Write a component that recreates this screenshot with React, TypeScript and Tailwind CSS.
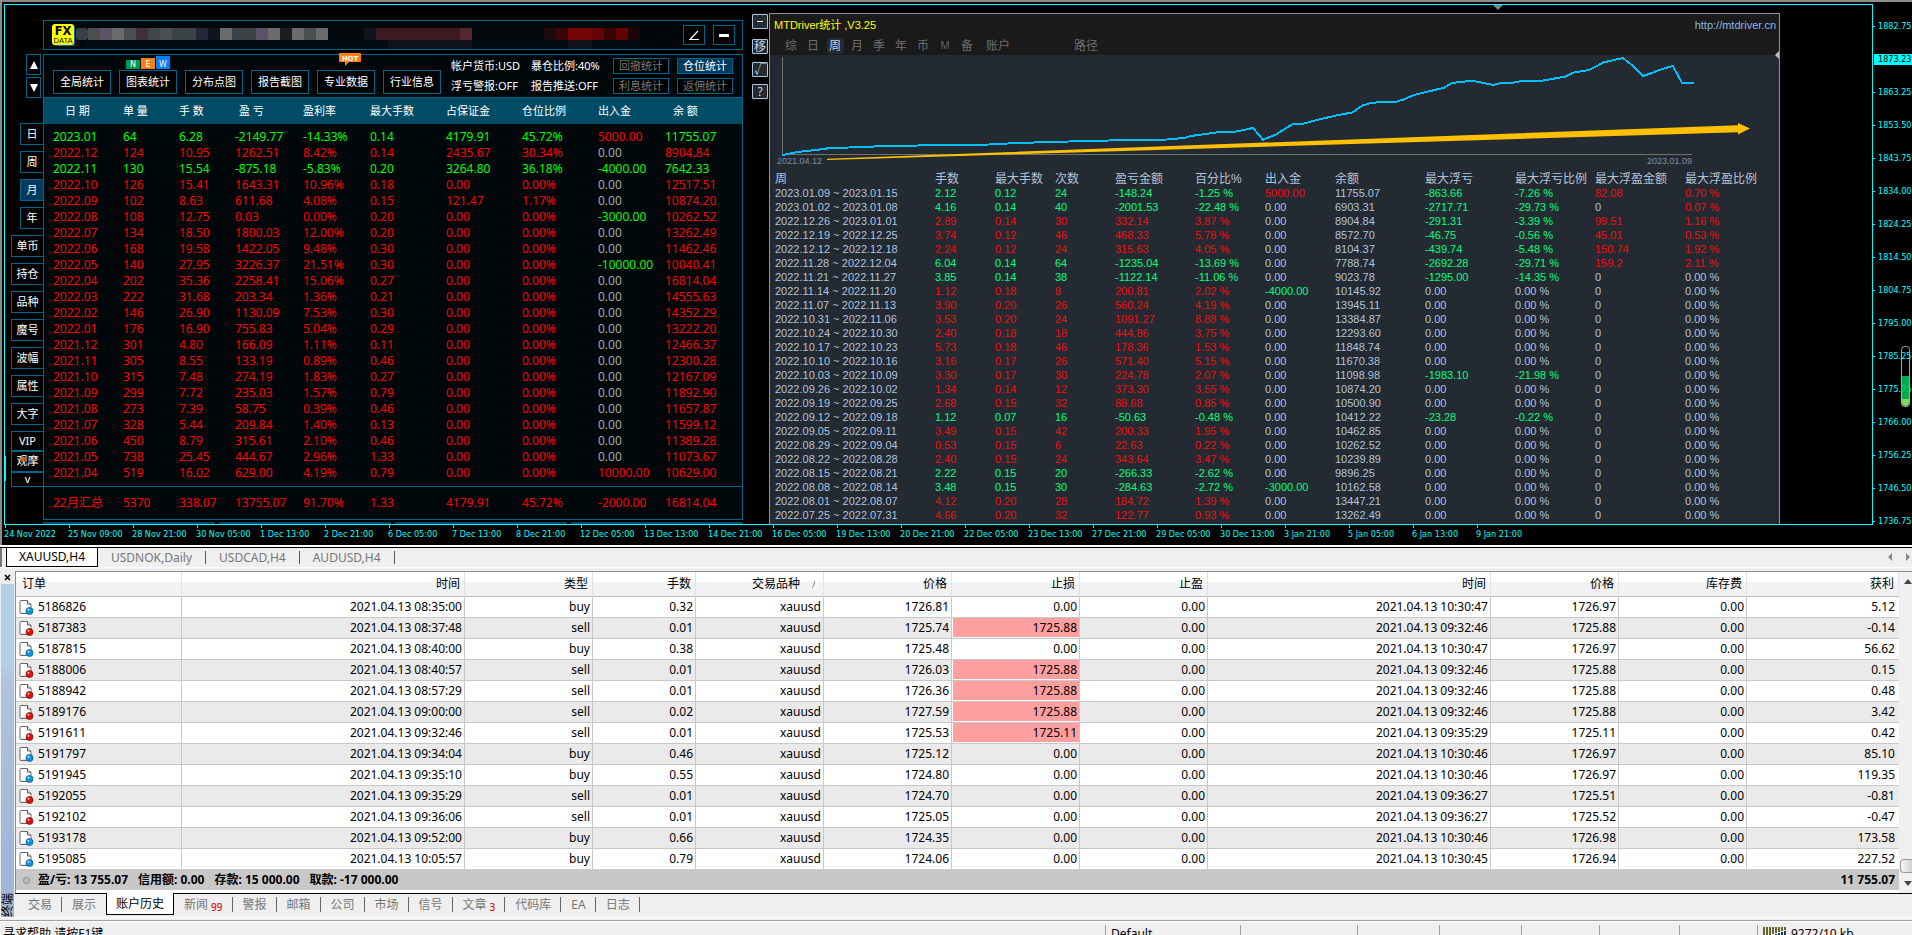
import React from 'react';

/* ---------- data ---------- */

const MONTHS: string[][] = [
  ['2023.01', '64', '6.28', '-2149.77', '-14.33%', '0.14', '4179.91', '45.72%', '5000.00', '11755.07'],
  ['2022.12', '124', '10.95', '1262.51', '8.42%', '0.14', '2435.67', '30.34%', '0.00', '8904.84'],
  ['2022.11', '130', '15.54', '-875.18', '-5.83%', '0.20', '3264.80', '36.18%', '-4000.00', '7642.33'],
  ['2022.10', '126', '15.41', '1643.31', '10.96%', '0.18', '0.00', '0.00%', '0.00', '12517.51'],
  ['2022.09', '102', '8.63', '611.68', '4.08%', '0.15', '121.47', '1.17%', '0.00', '10874.20'],
  ['2022.08', '108', '12.75', '0.03', '0.00%', '0.20', '0.00', '0.00%', '-3000.00', '10262.52'],
  ['2022.07', '134', '18.50', '1800.03', '12.00%', '0.20', '0.00', '0.00%', '0.00', '13262.49'],
  ['2022.06', '168', '19.58', '1422.05', '9.48%', '0.30', '0.00', '0.00%', '0.00', '11462.46'],
  ['2022.05', '140', '27.95', '3226.37', '21.51%', '0.30', '0.00', '0.00%', '-10000.00', '10040.41'],
  ['2022.04', '202', '35.36', '2258.41', '15.06%', '0.27', '0.00', '0.00%', '0.00', '16814.04'],
  ['2022.03', '222', '31.68', '203.34', '1.36%', '0.21', '0.00', '0.00%', '0.00', '14555.63'],
  ['2022.02', '146', '26.90', '1130.09', '7.53%', '0.30', '0.00', '0.00%', '0.00', '14352.29'],
  ['2022.01', '176', '16.90', '755.83', '5.04%', '0.29', '0.00', '0.00%', '0.00', '13222.20'],
  ['2021.12', '301', '4.80', '166.09', '1.11%', '0.11', '0.00', '0.00%', '0.00', '12466.37'],
  ['2021.11', '305', '8.55', '133.19', '0.89%', '0.46', '0.00', '0.00%', '0.00', '12300.28'],
  ['2021.10', '315', '7.48', '274.19', '1.83%', '0.27', '0.00', '0.00%', '0.00', '12167.09'],
  ['2021.09', '299', '7.72', '235.03', '1.57%', '0.79', '0.00', '0.00%', '0.00', '11892.90'],
  ['2021.08', '273', '7.39', '58.75', '0.39%', '0.46', '0.00', '0.00%', '0.00', '11657.87'],
  ['2021.07', '328', '5.44', '209.84', '1.40%', '0.13', '0.00', '0.00%', '0.00', '11599.12'],
  ['2021.06', '450', '8.79', '315.61', '2.10%', '0.46', '0.00', '0.00%', '0.00', '11389.28'],
  ['2021.05', '738', '25.45', '444.67', '2.96%', '1.33', '0.00', '0.00%', '0.00', '11073.67'],
  ['2021.04', '519', '16.02', '629.00', '4.19%', '0.79', '0.00', '0.00%', '10000.00', '10629.00'],
];
const MONTH_TOTAL = ['22月汇总', '5370', '338.07', '13755.07', '91.70%', '1.33', '4179.91', '45.72%', '-2000.00', '16814.04'];
const MONTH_HEADS: [string, string][] = [
  ['日 期', 'w-[79px] pl-[21px]'],
  ['单 量', 'w-[56px]'],
  ['手 数', 'w-[56px]'],
  ['盈 亏', 'w-[68px] pl-1'],
  ['盈利率', 'w-[67px]'],
  ['最大手数', 'w-[76px]'],
  ['占保证金', 'w-[76px]'],
  ['仓位比例', 'w-[76px]'],
  ['出入金', 'w-[67px]'],
  ['余 额', 'w-[77px] pl-2'],
];

const WEEKS: string[][] = [
  ['2023.01.09 ~ 2023.01.15', '2.12', '0.12', '24', '-148.24', '-1.25 %', '5000.00', '11755.07', '-863.66', '-7.26 %', '82.08', '0.70 %'],
  ['2023.01.02 ~ 2023.01.08', '4.16', '0.14', '40', '-2001.53', '-22.48 %', '0.00', '6903.31', '-2717.71', '-29.73 %', '0', '0.07 %'],
  ['2022.12.26 ~ 2023.01.01', '2.89', '0.14', '30', '332.14', '3.87 %', '0.00', '8904.84', '-291.31', '-3.39 %', '99.51', '1.16 %'],
  ['2022.12.19 ~ 2022.12.25', '3.74', '0.12', '46', '468.33', '5.78 %', '0.00', '8572.70', '-46.75', '-0.56 %', '45.01', '0.53 %'],
  ['2022.12.12 ~ 2022.12.18', '2.24', '0.12', '24', '315.63', '4.05 %', '0.00', '8104.37', '-439.74', '-5.48 %', '150.74', '1.92 %'],
  ['2022.11.28 ~ 2022.12.04', '6.04', '0.14', '64', '-1235.04', '-13.69 %', '0.00', '7788.74', '-2692.28', '-29.71 %', '159.2', '2.11 %'],
  ['2022.11.21 ~ 2022.11.27', '3.85', '0.14', '38', '-1122.14', '-11.06 %', '0.00', '9023.78', '-1295.00', '-14.35 %', '0', '0.00 %'],
  ['2022.11.14 ~ 2022.11.20', '1.12', '0.18', '8', '200.81', '2.02 %', '-4000.00', '10145.92', '0.00', '0.00 %', '0', '0.00 %'],
  ['2022.11.07 ~ 2022.11.13', '3.90', '0.20', '26', '560.24', '4.19 %', '0.00', '13945.11', '0.00', '0.00 %', '0', '0.00 %'],
  ['2022.10.31 ~ 2022.11.06', '3.53', '0.20', '24', '1091.27', '8.88 %', '0.00', '13384.87', '0.00', '0.00 %', '0', '0.00 %'],
  ['2022.10.24 ~ 2022.10.30', '2.40', '0.18', '18', '444.86', '3.75 %', '0.00', '12293.60', '0.00', '0.00 %', '0', '0.00 %'],
  ['2022.10.17 ~ 2022.10.23', '5.73', '0.18', '46', '178.36', '1.53 %', '0.00', '11848.74', '0.00', '0.00 %', '0', '0.00 %'],
  ['2022.10.10 ~ 2022.10.16', '3.16', '0.17', '26', '571.40', '5.15 %', '0.00', '11670.38', '0.00', '0.00 %', '0', '0.00 %'],
  ['2022.10.03 ~ 2022.10.09', '3.30', '0.17', '30', '224.78', '2.07 %', '0.00', '11098.98', '-1983.10', '-21.98 %', '0', '0.00 %'],
  ['2022.09.26 ~ 2022.10.02', '1.34', '0.14', '12', '373.30', '3.55 %', '0.00', '10874.20', '0.00', '0.00 %', '0', '0.00 %'],
  ['2022.09.19 ~ 2022.09.25', '2.68', '0.15', '32', '88.68', '0.85 %', '0.00', '10500.90', '0.00', '0.00 %', '0', '0.00 %'],
  ['2022.09.12 ~ 2022.09.18', '1.12', '0.07', '16', '-50.63', '-0.48 %', '0.00', '10412.22', '-23.28', '-0.22 %', '0', '0.00 %'],
  ['2022.09.05 ~ 2022.09.11', '3.49', '0.15', '42', '200.33', '1.95 %', '0.00', '10462.85', '0.00', '0.00 %', '0', '0.00 %'],
  ['2022.08.29 ~ 2022.09.04', '0.53', '0.15', '6', '22.63', '0.22 %', '0.00', '10262.52', '0.00', '0.00 %', '0', '0.00 %'],
  ['2022.08.22 ~ 2022.08.28', '2.40', '0.15', '24', '343.64', '3.47 %', '0.00', '10239.89', '0.00', '0.00 %', '0', '0.00 %'],
  ['2022.08.15 ~ 2022.08.21', '2.22', '0.15', '20', '-266.33', '-2.62 %', '0.00', '9896.25', '0.00', '0.00 %', '0', '0.00 %'],
  ['2022.08.08 ~ 2022.08.14', '3.48', '0.15', '30', '-284.63', '-2.72 %', '-3000.00', '10162.58', '0.00', '0.00 %', '0', '0.00 %'],
  ['2022.08.01 ~ 2022.08.07', '4.12', '0.20', '28', '184.72', '1.39 %', '0.00', '13447.21', '0.00', '0.00 %', '0', '0.00 %'],
  ['2022.07.25 ~ 2022.07.31', '4.66', '0.20', '32', '122.77', '0.93 %', '0.00', '13262.49', '0.00', '0.00 %', '0', '0.00 %'],
];
const WEEK_HEADS: [string, string][] = [
  ['周', 'w-[160px]'],
  ['手数', 'w-[60px]'],
  ['最大手数', 'w-[60px]'],
  ['次数', 'w-[60px]'],
  ['盈亏金额', 'w-[80px]'],
  ['百分比%', 'w-[70px]'],
  ['出入金', 'w-[70px]'],
  ['余额', 'w-[90px]'],
  ['最大浮亏', 'w-[90px]'],
  ['最大浮亏比例', 'w-[80px]'],
  ['最大浮盈金额', 'w-[90px]'],
  ['最大浮盈比例', 'w-[99px]'],
];

const ORDERS: string[][] = [
  ['5186826', '2021.04.13 08:35:00', 'buy', '0.32', 'xauusd', '1726.81', '0.00', '0.00', '2021.04.13 10:30:47', '1726.97', '0.00', '5.12'],
  ['5187383', '2021.04.13 08:37:48', 'sell', '0.01', 'xauusd', '1725.74', '1725.88', '0.00', '2021.04.13 09:32:46', '1725.88', '0.00', '-0.14'],
  ['5187815', '2021.04.13 08:40:00', 'buy', '0.38', 'xauusd', '1725.48', '0.00', '0.00', '2021.04.13 10:30:47', '1726.97', '0.00', '56.62'],
  ['5188006', '2021.04.13 08:40:57', 'sell', '0.01', 'xauusd', '1726.03', '1725.88', '0.00', '2021.04.13 09:32:46', '1725.88', '0.00', '0.15'],
  ['5188942', '2021.04.13 08:57:29', 'sell', '0.01', 'xauusd', '1726.36', '1725.88', '0.00', '2021.04.13 09:32:46', '1725.88', '0.00', '0.48'],
  ['5189176', '2021.04.13 09:00:00', 'sell', '0.02', 'xauusd', '1727.59', '1725.88', '0.00', '2021.04.13 09:32:46', '1725.88', '0.00', '3.42'],
  ['5191611', '2021.04.13 09:32:46', 'sell', '0.01', 'xauusd', '1725.53', '1725.11', '0.00', '2021.04.13 09:35:29', '1725.11', '0.00', '0.42'],
  ['5191797', '2021.04.13 09:34:04', 'buy', '0.46', 'xauusd', '1725.12', '0.00', '0.00', '2021.04.13 10:30:46', '1726.97', '0.00', '85.10'],
  ['5191945', '2021.04.13 09:35:10', 'buy', '0.55', 'xauusd', '1724.80', '0.00', '0.00', '2021.04.13 10:30:46', '1726.97', '0.00', '119.35'],
  ['5192055', '2021.04.13 09:35:29', 'sell', '0.01', 'xauusd', '1724.70', '0.00', '0.00', '2021.04.13 09:36:27', '1725.51', '0.00', '-0.81'],
  ['5192102', '2021.04.13 09:36:06', 'sell', '0.01', 'xauusd', '1725.05', '0.00', '0.00', '2021.04.13 09:36:27', '1725.52', '0.00', '-0.47'],
  ['5193178', '2021.04.13 09:52:00', 'buy', '0.66', 'xauusd', '1724.35', '0.00', '0.00', '2021.04.13 10:30:46', '1726.98', '0.00', '173.58'],
  ['5195085', '2021.04.13 10:05:57', 'buy', '0.79', 'xauusd', '1724.06', '0.00', '0.00', '2021.04.13 10:30:45', '1726.94', '0.00', '227.52'],
];
const ORDER_HEADS: [string, string][] = [
  ['订单', 'w-[166px]'],
  ['时间', 'w-[283px]'],
  ['类型', 'w-[128px]'],
  ['手数', 'w-[103px]'],
  ['交易品种', 'w-[128px]'],
  ['价格', 'w-[128px]'],
  ['止损', 'w-[128px]'],
  ['止盈', 'w-[128px]'],
  ['时间', 'w-[283px]'],
  ['价格', 'w-[128px]'],
  ['库存费', 'w-[128px]'],
  ['获利', 'w-[152px]'],
];

const TIMES = [
  '24 Nov 2022', '25 Nov 09:00', '28 Nov 21:00', '30 Nov 05:00', '1 Dec 13:00', '2 Dec 21:00', '6 Dec 05:00', '7 Dec 13:00',
  '8 Dec 21:00', '12 Dec 05:00', '13 Dec 13:00', '14 Dec 21:00', '16 Dec 05:00', '19 Dec 13:00', '20 Dec 21:00', '22 Dec 05:00',
  '23 Dec 13:00', '27 Dec 21:00', '29 Dec 05:00', '30 Dec 13:00', '3 Jan 21:00', '5 Jan 05:00', '6 Jan 13:00', '9 Jan 21:00',
];
const PRICES = [
  '1882.75', '1873.23', '1863.25', '1853.50', '1843.75', '1834.00', '1824.25', '1814.50',
  '1804.75', '1795.00', '1785.25', '1775.75', '1766.00', '1756.25', '1746.50', '1736.75',
];

/* start, width, colour of the blocks that hide the account name */
const MOSAIC: [number, number, string][] = [
  [0, 12, '#3b4044'], [12, 12, '#4d4f4f'], [24, 12, '#5c5366'], [36, 12, '#6b6b6b'], [48, 12, '#4b4f50'], [60, 12, '#40303a'],
  [72, 12, '#3e464a'], [84, 12, '#4a5050'], [96, 24, '#3b4246'], [120, 12, '#22283a'], [132, 12, '#10141e'], [144, 12, '#6b6b6b'],
  [156, 24, '#3b4246'], [180, 12, '#5a5266'], [192, 12, '#6b6b6b'], [204, 12, '#1e1c1e'], [216, 12, '#6b6b6b'], [228, 12, '#4a5050'],
  [240, 12, '#6b6b6b'], [288, 12, '#10141e'], [300, 84, '#3b1a22'], [384, 12, '#552830'], [468, 12, '#1f0a0e'], [480, 12, '#3a0709'],
  [492, 24, '#750505'], [516, 12, '#650404'], [528, 12, '#3a0405'], [540, 12, '#650202'], [552, 12, '#200407'],
];

/* ---------- small parts ---------- */

function Logo() {
  return (
    <svg viewBox="0 0 23 22" className="h-[22px] w-[23px] shrink-0" role="img" aria-label="FX DATA">
      <rect x="1" y="1" width="22" height="21" rx="3" fill="#0068b0" />
      <rect width="22" height="21" rx="3" fill="#ffff00" />
      <text x="11" y="11" textAnchor="middle" fontFamily="DejaVu Sans" fontWeight="bold" fontSize="11.500" fill="#000">FX</text>
      <text x="11" y="18.500" textAnchor="middle" fontFamily="Liberation Sans" fontSize="7.500" fill="#000">DATA</text>
    </svg>
  );
}

function Mosaic() {
  return (
    <svg viewBox="0 0 566 28" className="h-7 w-[566px]" aria-hidden="true">
      <rect x="0" y="1" width="564" height="24" rx="8" fill="#03090d" />
      <rect x="10" y="19" width="554" height="9" fill="#020c12" />
      <rect x="312" y="19" width="84" height="9" fill="#11131b" />
      <rect x="492" y="19" width="24" height="9" fill="#11131b" />
      {MOSAIC.map(([x, w, fill]) => (
        <rect key={x} x={x} y="7" width={w} height="12" fill={fill} rx={x === 0 ? 3 : 0} />
      ))}
    </svg>
  );
}

function DocIcon({ sell }: { sell: boolean }) {
  return (
    <svg viewBox="0 0 15 16" className="h-4 w-[15px] shrink-0" aria-hidden="true">
      <path d="M1 2.500Q1 1.500 2 1.500H8.500L12 5V14.500H2Q1 14.500 1 13.500Z" fill="#fff" stroke="#666" />
      <path d="M3 13.500H11V6" fill="none" stroke="#ddd" />
      <path d="M8.500 1.500V5H12" fill="#fff" stroke="#555" />
      <circle cx="10.500" cy="12" r="3.500" fill={sell ? '#dd1111' : '#1193dd'} stroke={sell ? '#8a1500' : '#0a5c9c'} strokeWidth="0.800" />
      <circle cx="9.500" cy="10.800" r="1" fill="#fff" opacity="0.800" />
    </svg>
  );
}

function SideButton({ label, active, wide, height }: { label: string; active?: boolean; wide?: boolean; height?: string }) {
  return (
    <button
      type="button"
      className={`flex items-center justify-center border border-r-0 border-[#00658a] text-[11px] text-white ${wide ? 'w-8' : 'w-[23px]'} ${height ?? 'h-[22px]'} ${active ? 'bg-[#003a5c]' : 'bg-black'}`}
    >
      {label}
    </button>
  );
}

/* ---------- monthly statistics panel ---------- */

function monthColor(row: string[], col: number) {
  if (col === 8) {
    if (row[8] === '0.00') return 'text-[#a8a8a8]';
    return row[8].startsWith('-') ? 'text-[#00ff00]' : 'text-[#ff0000]';
  }
  return row[3].startsWith('-') ? 'text-[#00ff00]' : 'text-[#ff0000]';
}

function MonthPanel() {
  const tools = ['全局统计', '图表统计', '分布点图', '报告截图', '专业数据', '行业信息'];
  return (
    <div className="flex w-[700px] shrink-0 flex-col pt-[15px]">
      <div className="flex h-[30px] items-center gap-2 border border-[#00658a] bg-[#00070b] pl-2 pr-[7px]">
        <div className="flex flex-1 items-center gap-px">
          <Logo />
          <Mosaic />
        </div>
        <button type="button" aria-label="角度" className="flex h-5 w-[22px] items-center justify-center border border-[#00658a] bg-black">
          <svg viewBox="0 0 12 12" className="h-3 w-3" aria-hidden="true"><path d="M10 2L2 10.500H11" fill="none" stroke="#fff" strokeWidth="1.200" /></svg>
        </button>
        <button type="button" aria-label="最小化" className="flex h-5 w-[22px] items-center justify-center border border-[#00658a] bg-black">
          <span className="h-[3px] w-[10px] bg-white" />
        </button>
      </div>
      <div className="mt-1 border border-[#00658a] bg-[#00070b]">
        <div className="flex h-[42px] items-start gap-[10px] pl-[9px] pr-[9px] text-[11px] text-white">
          <div className="flex gap-2 pt-[15px]">
            {tools.map((t) => (
              <button key={t} type="button" className="relative h-6 w-[58px] whitespace-nowrap border border-[#00658a] bg-black">
                {t}
                {t === '图表统计' && (
                  <span className="absolute -top-[15px] left-1.5 flex items-end gap-px font-['DejaVu_Sans'] text-[8px] leading-[8px]">
                    <span className="w-[14px] bg-[#009944] pt-px">N</span>
                    <span className="w-[14px] bg-[#ff7f0e] pt-[3px]">E</span>
                    <span className="w-[14px] bg-[#0080ff] pt-[5px]">W</span>
                  </span>
                )}
                {t === '专业数据' && (
                  <span className="absolute -top-[18px] left-[21px]">
                    <svg viewBox="0 0 22 14" className="h-[14px] w-[22px]" aria-label="HOT">
                      <path d="M0 1Q0 0 1 0H21Q22 0 22 1V9H10L6 13V9H0Z" fill="#ff7f0e" />
                      <text x="11" y="7.500" textAnchor="middle" fontFamily="DejaVu Sans" fontWeight="bold" fontSize="7" fill="#fff">HOT</text>
                    </svg>
                  </span>
                )}
              </button>
            ))}
          </div>
          <div className="grid flex-1 grid-cols-[80px_82px_56px_56px] items-center gap-y-1 pt-[3px] leading-4">
            <span className="whitespace-nowrap">帐户货币:USD</span>
            <span className="whitespace-nowrap">暴仓比例:40%</span>
            <button type="button" className="flex h-4 items-center justify-center border border-[#00658a] bg-black text-[#7a7a7a]">回撤统计</button>
            <button type="button" className="ml-2 flex h-4 w-14 items-center justify-center border border-[#00658a] bg-[#003a5c]">仓位统计</button>
            <span className="whitespace-nowrap">浮亏警报:OFF</span>
            <span className="whitespace-nowrap">报告推送:OFF</span>
            <button type="button" className="flex h-4 items-center justify-center border border-[#00658a] bg-black text-[#7a7a7a]">利息统计</button>
            <button type="button" className="ml-2 flex h-4 w-14 items-center justify-center border border-[#00658a] bg-black text-[#7a7a7a]">返佣统计</button>
          </div>
        </div>
        <table className="w-full table-fixed border-separate border-spacing-0 text-left text-[12px] leading-4">
          <thead>
            <tr>
              {MONTH_HEADS.map(([h, c]) => (
                <th key={h} className={`h-[27px] whitespace-pre border-t border-[#00658a] bg-[#004c66] text-[11px] font-normal text-white ${c}`}>{h}</th>
              ))}
            </tr>
            <tr aria-hidden="true"><td colSpan={10} className="h-[5px]" /></tr>
          </thead>
          <tbody>
            {MONTHS.map((r) => (
              <tr key={r[0]}>
                {r.map((v, i) => (
                  <td key={i} className={`h-4 whitespace-nowrap ${i === 0 ? 'pl-[9px]' : ''} ${monthColor(r, i)}`}>{v}</td>
                ))}
              </tr>
            ))}
          </tbody>
          <tfoot>
            <tr aria-hidden="true"><td colSpan={10} className="h-[6px] border-b border-[#00658a]" /></tr>
            <tr className="text-[#ff0000]">
              {MONTH_TOTAL.map((v, i) => (
                <td key={i} className={`h-8 whitespace-nowrap ${i === 0 ? 'pl-[9px]' : ''}`}>{v}</td>
              ))}
            </tr>
          </tfoot>
        </table>
      </div>
      <div className="mt-[2px] grid h-[2px] grid-cols-4 gap-1">
        <span className="bg-[#004c66]" /><span className="bg-[#004c66]" /><span className="bg-[#004c66]" /><span className="bg-[#004c66]" />
      </div>
    </div>
  );
}

function SideRail() {
  return (
    <nav className="flex w-[38px] shrink-0 flex-col items-end pt-[49px]">
      <button type="button" aria-label="上" className="mr-[2px] flex h-[21px] w-[15px] items-center justify-center border border-[#00658a]">
        <svg viewBox="0 0 8 8" className="h-2 w-2" aria-hidden="true"><path d="M4 0L8 8H0Z" fill="#fff" /></svg>
      </button>
      <button type="button" aria-label="下" className="mr-[2px] mt-[2px] flex h-[21px] w-[15px] items-center justify-center border border-[#00658a]">
        <svg viewBox="0 0 8 8" className="h-2 w-2" aria-hidden="true"><path d="M0 0H8L4 8Z" fill="#fff" /></svg>
      </button>
      <div className="mt-[25px] flex flex-col items-end gap-1.5">
        <SideButton label="日" />
        <SideButton label="周" />
        <SideButton label="月" active />
        <SideButton label="年" />
        {['单币', '持仓', '品种', '魔号', '波幅', '属性', '大字'].map((l) => (
          <SideButton key={l} label={l} wide />
        ))}
        <div className="flex flex-col">
          <SideButton label="VIP" wide height="h-5" />
          <SideButton label="观摩" wide height="h-[21px]" />
          <SideButton label="v" wide height="h-[15px]" />
        </div>
      </div>
    </nav>
  );
}

/* ---------- weekly statistics panel ---------- */

const CURVE =
  '782,155 788,154 797,152 816,150 830,148 868,147 880,146 918,145.5 989,144.5 1017,143 1069,141.5 1109,140.5 1167,139.5 1184,138 1191,136 1220,132 1236,131.5 1253,128 1263,139.7 1270,137 1276,134.5 1292,124.5 1304,123.6 1314,120.7 1337,115.3 1353,112.3 1362,105.7 1369,103.5 1380,102 1396,101.7 1403,99.7 1415,94.7 1444,87.7 1452,83 1472,80.7 1493,85 1501,83 1513,82.7 1522,81 1542,80.7 1565,76.7 1573,72.7 1589,70 1604,62.3 1623,58 1633,66 1643,76 1651,73.3 1662,69 1673,66 1682,83 1694,83';

function weekColor(row: string[], col: number) {
  const v = row[col];
  if (col === 0 || col === 7) return '';
  const gain = 'text-[#ee1010]';
  const loss = 'text-[#00ff7f]';
  if (col <= 5) return row[4].startsWith('-') ? loss : gain;
  if (parseFloat(v) === 0) return '';
  return v.startsWith('-') ? loss : gain;
}

function WeekPanel() {
  return (
    <div className="relative mr-[92px] mt-2 flex min-w-0 flex-1 flex-col border border-b-0 border-[#8592a2] bg-[#242a32] font-['Liberation_Sans','Noto_Sans_CJK_SC',sans-serif] text-[11px] text-[#b0c4de]">
      <div className="bg-[#1a1a1a]">
        <div className="flex h-[22px] items-center justify-between pl-1 pr-[3px]">
          <h2 className="text-[#ffff00]">MTDriver统计 ,V3.25</h2>
          <a href="http://mtdriver.cn" className="text-[#87b8e6]">http://mtdriver.cn</a>
        </div>
        <div className="flex h-[19px] items-center pl-[10px] text-[12px] text-[#6e6e6e]">
          {['综', '日', '周', '月', '季', '年', '币', 'M', '备'].map((t) => (
            <span key={t} className="flex w-[22px] justify-center">
              <button type="button" className={`flex h-4 w-[17px] items-center justify-center rounded-sm ${t === '周' ? 'bg-[#242a32] text-[#c0d4ee]' : t === 'M' ? 'text-[11px] text-[#5a6478]' : ''}`}>{t}</button>
            </span>
          ))}
          <button type="button" className="ml-2">账户</button>
          <button type="button" className="ml-16">路径</button>
        </div>
      </div>
      <svg viewBox="770 55 1009 100" preserveAspectRatio="none" className="block h-[100px] w-full overflow-visible" role="img" aria-label="余额曲线">
        <path d="M782.500 57V154.500H1692" fill="none" stroke="#6f736b" />
        <polyline points={CURVE} fill="none" stroke="#00bfff" strokeWidth="2" strokeLinejoin="round" shapeRendering="crispEdges" />
        <path d="M827 158.700L1738 125.200V123L1750 128.500L1738 134.500V132.300L827 160Z" fill="#ffc000" />
      </svg>
      <div className="flex h-[17px] justify-between pl-[7px] pr-[87px] text-[9px] leading-[12px] text-[#7d8da1]">
        <span>2021.04.12</span>
        <span>2023.01.09</span>
      </div>
      <table className="w-full table-fixed border-separate border-spacing-0 text-left leading-[14px]">
        <thead>
          <tr>
            {WEEK_HEADS.map(([h, c]) => (
              <th key={h} className={`h-[14px] whitespace-nowrap pl-[5px] text-[12px] font-normal ${c}`}>{h}</th>
            ))}
          </tr>
        </thead>
        <tbody>
          {WEEKS.map((r) => (
            <tr key={r[0]}>
              {r.map((v, i) => (
                <td key={i} className={`h-[14px] whitespace-nowrap pl-[5px] ${weekColor(r, i)}`}>{v}</td>
              ))}
            </tr>
          ))}
        </tbody>
      </table>
      <svg viewBox="0 0 4 8" className="absolute right-0 top-[37px] h-2 w-1" aria-hidden="true"><path d="M4 0V8L0 4Z" fill="#c0c0c0" /></svg>
    </div>
  );
}

function WeekRail() {
  const cls = 'flex h-[15px] w-4 items-center justify-center rounded-[1px] border border-[#b0c4de] bg-[#242a32] text-[12px] leading-3 text-[#c8d4e4]';
  return (
    <div className="ml-[9px] mr-px flex shrink-0 flex-col pt-[9px]">
      <button type="button" aria-label="收起" className={cls}><span className="h-px w-1.5 bg-white" /></button>
      <button type="button" className={`mt-[10px] ${cls}`}>移</button>
      <button type="button" className={`mt-2 ${cls}`}>√</button>
      <button type="button" className={`mt-[7px] ${cls}`}>?</button>
    </div>
  );
}

/* ---------- chart window ---------- */

function ChartWindow() {
  return (
    <section className="flex shrink-0 border-l-2 border-t-2 border-[#8c8c8c] bg-black pl-[2px] pt-[2px]">
      <div className="min-w-0 flex-1">
        <div className="relative flex items-stretch border border-[#00ffff]">
          <SideRail />
          <MonthPanel />
          <WeekRail />
          <WeekPanel />
          <span className="absolute bottom-[43px] left-0 h-[25px] w-px bg-[#00ffff]" />
          <svg viewBox="0 0 10 5" className="absolute left-[79.7%] top-0 h-[5px] w-[10px]" aria-hidden="true"><path d="M0 0H10L5 5Z" fill="#778899" /></svg>
        </div>
        <div className="flex h-5 overflow-hidden font-['DejaVu_Sans_Condensed','Noto_Sans',sans-serif] text-[9px] leading-[13px] text-[#00ffff]">
          {TIMES.map((t) => (
            <div key={t} className="w-16 shrink-0 whitespace-nowrap">
              <div className="ml-px h-[3px] w-px bg-[#00ffff]" />
              <div>{t}</div>
            </div>
          ))}
        </div>
      </div>
      <div className="relative w-[39px] shrink-0 pt-[6px] font-['DejaVu_Sans_Condensed','Noto_Sans',sans-serif] text-[9px] leading-[11px] text-[#00ffff]">
        {PRICES.map((p, i) => (
          <div key={p} className="flex h-[33px] items-center">
            {i !== 1 && <span className="mr-[3px] h-px w-[2px] bg-[#00ffff]" />}
            <span className={i === 1 ? 'ml-px flex-1 bg-[#00ffff] pl-1 text-black' : ''}>{p}</span>
          </div>
        ))}
        <svg viewBox="0 0 9 61" className="absolute right-[2px] top-[342px] h-[61px] w-[9px]" aria-hidden="true">
          <rect x="1" y="30" width="7" height="23" fill="#00c85a" opacity="0.850" />
          <path d="M1 53H8V57Q8 60 4.500 60T1 57Z" fill="#7fd860" />
          <rect x="0.500" y="0.500" width="8" height="60" rx="3" fill="none" stroke="#a9a0b4" />
        </svg>
      </div>
    </section>
  );
}

function ChartTabs() {
  const cls = 'my-[3px] border-r border-[#555] px-[13px] text-[#777]';
  return (
    <div className="flex shrink-0 border-t-2 border-white bg-[#efefef] leading-[14px]">
      <div className="flex h-5 flex-1 border-t border-black">
        <span className="w-[6px] border-l-2 border-[#777]" />
        <button type="button" className="w-[92px] border border-t-0 border-black bg-white text-black">XAUUSD,H4</button>
        <div className="flex">
          <button type="button" className={cls}>USDNOK,Daily</button>
          <button type="button" className={cls}>USDCAD,H4</button>
          <button type="button" className={cls}>AUDUSD,H4</button>
        </div>
        <div className="ml-auto flex items-start gap-[14px] pr-[2px] pt-[5px]">
          <button type="button" aria-label="向左" className="flex"><svg viewBox="0 0 4 8" className="h-2 w-1" aria-hidden="true"><path d="M4 0V8L0 4Z" fill="#888" /></svg></button>
          <button type="button" aria-label="向右" className="flex"><svg viewBox="0 0 4 8" className="h-2 w-1" aria-hidden="true"><path d="M0 0V8L4 4Z" fill="#888" /></svg></button>
        </div>
      </div>
    </div>
  );
}

/* ---------- terminal ---------- */

function OrdersTable() {
  return (
    <table className="w-full table-fixed border-separate border-spacing-0 text-right leading-5">
      <thead>
        <tr>
          {ORDER_HEADS.map(([h, c], i) => (
            <th
              key={i}
              className={`h-[25px] border-b border-r border-b-[#bdbdbd] border-r-[#e2e3e5] bg-linear-to-b from-white from-40% to-[#f1f2f4] to-45% pb-px font-normal ${c} ${i === 0 ? 'pl-[6px] text-left' : 'pr-1'}`}
            >
              {i === 4 ? (
                <span className="flex items-center justify-end gap-3">
                  {h}
                  <svg viewBox="0 0 6 8" className="mr-px h-2 w-1.5" aria-hidden="true"><path d="M0.500 8L3.500 0" stroke="#888" /><path d="M3.500 0L5.500 7.500H1" fill="none" stroke="#fff" /></svg>
                </span>
              ) : (
                h
              )}
            </th>
          ))}
        </tr>
      </thead>
      <tbody>
        {ORDERS.map((r, n) => (
          <tr key={r[0]} className={n % 2 ? 'bg-[#eaeaea]' : 'bg-white'}>
            {r.map((v, i) => (
              <td
                key={i}
                className={`h-[21px] border-b border-[#c8c8c8] ${i === 11 ? 'pr-1' : 'border-r pr-[2px]'} ${i === 6 && v !== '0.00' ? 'bg-[#ff9f9f] shadow-[inset_1px_-1px_0_#fff]' : ''}`}
              >
                {i === 0 ? (
                  <span className="flex items-center gap-1 pl-[3px]">
                    <DocIcon sell={r[2] === 'sell'} />
                    {v}
                  </span>
                ) : (
                  v
                )}
              </td>
            ))}
          </tr>
        ))}
      </tbody>
      <tfoot>
        <tr className="bg-[#c8c8c8] font-bold">
          <td colSpan={11} className="h-5 text-left">
            <span className="flex items-center gap-[10px] pl-[7px]">
              <span className="flex items-center gap-2">
                <span className="h-[7px] w-[7px] rounded-full border border-[#8a8a8a] bg-[#bbb]" />
                盈/亏: 13 755.07
              </span>
              <span>信用额: 0.00</span>
              <span>存款: 15 000.00</span>
              <span>取款: -17 000.00</span>
            </span>
          </td>
          <td className="pr-1">11 755.07</td>
        </tr>
      </tfoot>
    </table>
  );
}

function TerminalTabs() {
  const tabs: { name: string; count?: string }[] = [
    { name: '交易' }, { name: '展示' }, { name: '账户历史' }, { name: '新闻', count: '99' }, { name: '警报' }, { name: '邮箱' }, { name: '公司' },
    { name: '市场' }, { name: '信号' }, { name: '文章', count: '3' }, { name: '代码库' }, { name: 'EA' }, { name: '日志' },
  ];
  return (
    <div className="flex h-6 items-start border-t border-black bg-[#efefef] pl-[3px] text-[#777]">
      {tabs.map(({ name, count }) =>
        name === '账户历史' ? (
          <button key={name} type="button" className="-mt-px h-[22px] w-[68px] border border-t-0 border-black bg-white text-black">{name}</button>
        ) : (
          <button
            key={name}
            type="button"
            className={`mt-[3px] flex h-[15px] items-center pl-[10px] leading-[15px] ${name === '展示' ? 'pr-[10px]' : 'border-r border-[#666] pr-[9px]'}`}
          >
            {name}
            {count && <span className="ml-[3px] self-end text-[10px] font-medium leading-[9px] text-[#dd1111]">{count}</span>}
          </button>
        ),
      )}
    </div>
  );
}

function Terminal() {
  return (
    <section className="flex shrink-0 border-t border-white bg-[#efefef]">
      <div className="flex w-[15px] shrink-0 flex-col items-center pt-[3px]">
        <button type="button" aria-label="关闭" className="flex h-[13px] items-center">
          <svg viewBox="0 0 7 7" className="h-[7px] w-[7px]" aria-hidden="true"><path d="M1 1L6 6M6 1L1 6" stroke="#000" strokeWidth="1.600" /></svg>
        </button>
        <div className="flex w-[13px] flex-1 items-end justify-center bg-linear-to-b from-[#b4cfe8] from-24% via-[#b0c2de] via-30% to-[#a0b8d6] to-80%">
          <span className="rotate-180 leading-[13px] [text-orientation:sideways] [writing-mode:vertical-rl]">终端</span>
        </div>
      </div>
      <div className="min-w-0 flex-1 pt-[3px]">
        <div className="flex border-l border-t border-[#8c8c8c] bg-white pb-[3px]">
          <div className="min-w-0 flex-1"><OrdersTable /></div>
          <div className="-mb-[3px] flex w-[13px] shrink-0 flex-col items-end overflow-hidden bg-[#f0f0f0]">
            <svg viewBox="0 0 8 5" className="mt-[7px] h-[5px] w-2 shrink-0" aria-hidden="true"><path d="M0 5L4 0L8 5Z" fill="#444" /></svg>
            <span className="mt-auto h-[14px] w-3 shrink-0 rounded-l-sm border border-r-0 border-[#999] bg-linear-to-r from-[#f6f6f6] to-[#d0d0d0]" />
            <svg viewBox="0 0 8 5" className="mb-[7px] mt-2 h-[5px] w-2 shrink-0" aria-hidden="true"><path d="M0 0H8L4 5Z" fill="#444" /></svg>
          </div>
        </div>
        <TerminalTabs />
      </div>
    </section>
  );
}

function StatusBar() {
  const cls = 'border-l border-[#a0a0a0]';
  return (
    <footer className="flex h-8 shrink-0 border-t border-white bg-[#efefef] pt-[3px] leading-[18px]">
      <div className="min-w-0 flex-1 pl-[3px]">寻求帮助,请按F1键</div>
      <div className={`w-[135px] pl-[5px] ${cls}`}>Default</div>
      <div className={`w-[117px] ${cls}`} />
      <div className={`w-[82px] ${cls}`} />
      <div className={`w-[82px] ${cls}`} />
      <div className={`w-[78px] ${cls}`} />
      <div className={`w-[80px] ${cls}`} />
      <div className={`w-[78px] ${cls}`} />
      <div className={`flex w-[155px] items-start gap-1 pl-[5px] ${cls}`}>
        <svg viewBox="0 0 24 12" className="mt-[2px] h-3 w-6" aria-hidden="true">
          {[0, 3, 6, 9, 12, 15, 18, 21].map((x, i) => (
            <g key={x}>
              <rect x={x} y="0" width="2" height={i < 3 ? 12 : 10 - i} fill="#66662c" />
              {i >= 3 && <rect x={x} y={11 - i} width="2" height={i + 1} fill="#0b3c5c" />}
            </g>
          ))}
        </svg>
        9272/10 kb
      </div>
    </footer>
  );
}

export default function App() {
  return (
    <main className="flex h-screen flex-col overflow-hidden bg-[#efefef] font-['Noto_Sans','Noto_Sans_CJK_SC',sans-serif] text-[12px] text-black">
      <ChartWindow />
      <ChartTabs />
      <Terminal />
      <div className="h-1 shrink-0 border-b border-t border-b-[#a0a0a0] border-t-white bg-[#efefef]" />
      <StatusBar />
    </main>
  );
}
